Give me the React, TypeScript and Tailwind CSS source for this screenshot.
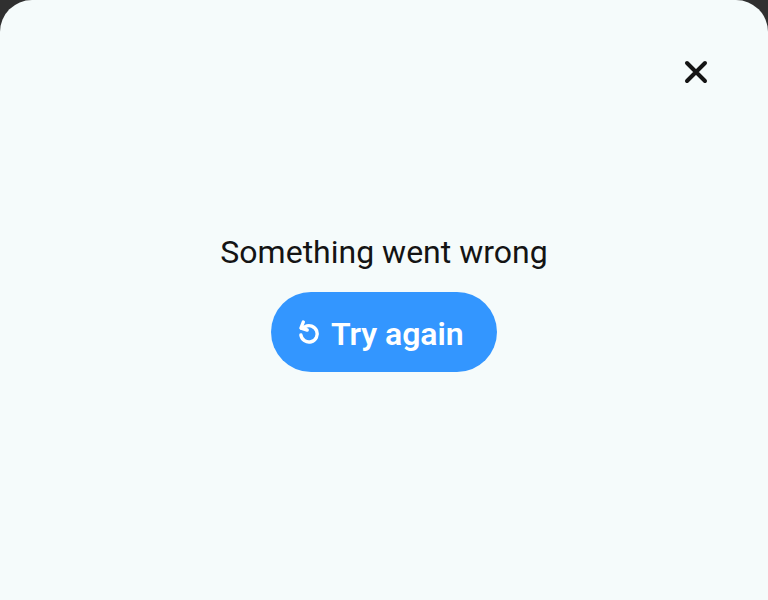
export default function App() {
  return (
    <div className="h-[600px] w-[768px] overflow-hidden bg-[#303030] font-['Roboto',sans-serif] antialiased">
      <main className="flex h-full flex-col rounded-t-[32px] bg-[#f5fbfb]">
        <header className="flex h-[144px] shrink-0 items-center justify-end pr-12">
          <button aria-label="Close" className="flex size-12 items-center justify-center">
            <svg viewBox="0 0 48 48" className="size-12" fill="none" stroke="#141414" strokeWidth="4" strokeLinecap="round">
              <path d="M15 15 33 33M33 15 15 33" />
            </svg>
          </button>
        </header>
        <section className="flex flex-col items-center pt-[84px]">
          <h1 className="text-[32px] leading-[48px] font-normal text-[#141414]">Something went wrong</h1>
          <button className="mt-4 flex h-20 w-[226px] items-center gap-[11px] rounded-full bg-[#3396ff] pl-[27px] text-white">
            <svg viewBox="0 0 22 28" className="h-7 w-[22px] shrink-0" fill="none" stroke="currentColor" strokeWidth="3.4" strokeLinecap="round" strokeLinejoin="round">
              <path d="M5.3 4 3 10.2 9.2 12" />
              <path d="M3.4 10.2 7 8.7A8.2 8.2 0 1 1 2.9 17" />
            </svg>
            <span className="pt-1 text-[32px] leading-10 font-semibold tracking-[-0.05px] whitespace-nowrap">Try again</span>
          </button>
        </section>
      </main>
    </div>
  );
}
